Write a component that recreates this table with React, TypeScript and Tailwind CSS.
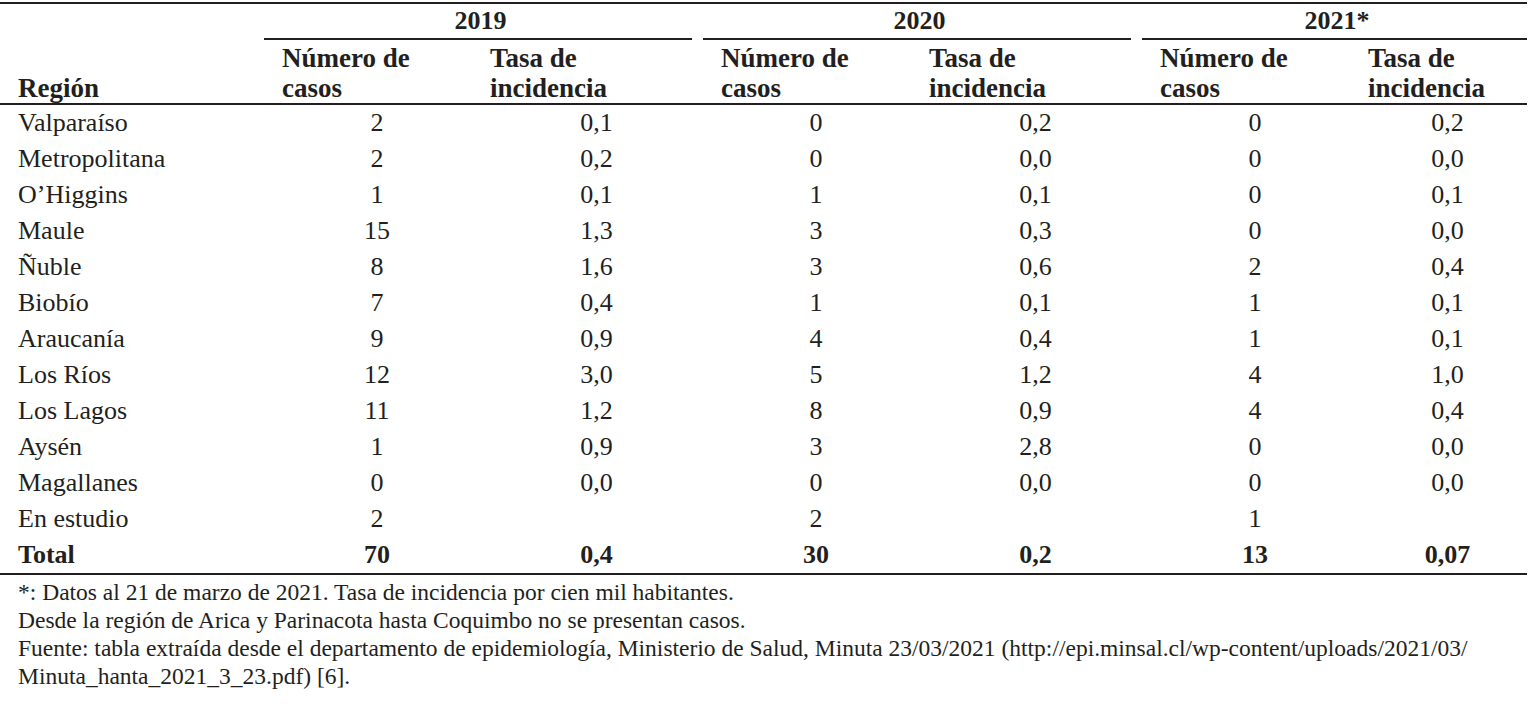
import React from "react";

type Row = { region: string; v: (string | null)[] };

const rows: Row[] = [
  { region: "Valparaíso", v: ["2", "0,1", "0", "0,2", "0", "0,2"] },
  { region: "Metropolitana", v: ["2", "0,2", "0", "0,0", "0", "0,0"] },
  { region: "O’Higgins", v: ["1", "0,1", "1", "0,1", "0", "0,1"] },
  { region: "Maule", v: ["15", "1,3", "3", "0,3", "0", "0,0"] },
  { region: "Ñuble", v: ["8", "1,6", "3", "0,6", "2", "0,4"] },
  { region: "Biobío", v: ["7", "0,4", "1", "0,1", "1", "0,1"] },
  { region: "Araucanía", v: ["9", "0,9", "4", "0,4", "1", "0,1"] },
  { region: "Los Ríos", v: ["12", "3,0", "5", "1,2", "4", "1,0"] },
  { region: "Los Lagos", v: ["11", "1,2", "8", "0,9", "4", "0,4"] },
  { region: "Aysén", v: ["1", "0,9", "3", "2,8", "0", "0,0"] },
  { region: "Magallanes", v: ["0", "0,0", "0", "0,0", "0", "0,0"] },
  { region: "En estudio", v: ["2", null, "2", null, "1", null] },
];

const total = ["70", "0,4", "30", "0,2", "13", "0,07"];
const years = ["2019", "2020", "2021*"];

export default function App() {
  return (
    <div className="w-[1529px] bg-white pt-[2px] font-['Liberation_Serif',serif] text-[#231f20]">
      <div className="mr-[2px] border-t-2 border-[#231f20]">
        {/* header */}
        <div className="grid grid-cols-[264px_208px_231px_208px_231px_208px_1fr] border-b-2 border-[#231f20]">
          <div className="row-span-2 flex items-end pl-[18px] text-[27px] font-bold leading-[30px]">
            Región
          </div>
          {years.map((y, i) => (
            <div
              key={y}
              className={`col-span-2 h-[36px] border-b-2 border-[#231f20] pl-[5px] text-center text-[26px] font-bold leading-[34px] ${
                i < 2 ? "mr-[11px]" : ""
              }`}
            >
              {y}
            </div>
          ))}
          {years.map((y) => (
            <React.Fragment key={"h" + y}>
              <div className="h-[63px] pl-[18px] pt-[3px] text-[27px] font-bold leading-[30px] whitespace-nowrap">
                Número de
                <br />
                casos
              </div>
              <div className="h-[63px] pl-[18px] pt-[3px] text-[27px] font-bold leading-[30px] whitespace-nowrap">
                Tasa de
                <br />
                incidencia
              </div>
            </React.Fragment>
          ))}
        </div>

        {/* body */}
        <div className="grid grid-cols-[264px_208px_231px_208px_231px_208px_1fr] text-[26px] leading-[36px]">
          {rows.map((r) => (
            <React.Fragment key={r.region}>
              <div className="h-9 pl-[18px]">{r.region}</div>
              {r.v.map((c, j) => (
                <div key={j} className="h-9 pl-[18px] text-center">
                  {c ?? ""}
                </div>
              ))}
            </React.Fragment>
          ))}
          <div className="h-9 pl-[18px] font-bold">Total</div>
          {total.map((c, j) => (
            <div key={j} className="h-9 pl-[18px] text-center font-bold">
              {c}
            </div>
          ))}
        </div>
      </div>

      <div className="mr-[2px] border-t-2 border-[#231f20] pl-[18px] pt-[3px] text-[23.5px] leading-[28px] whitespace-nowrap">
        <p>*: Datos al 21 de marzo de 2021. Tasa de incidencia por cien mil habitantes.</p>
        <p>Desde la región de Arica y Parinacota hasta Coquimbo no se presentan casos.</p>
        <p>
          Fuente: tabla extraída desde el departamento de epidemiología, Ministerio de Salud, Minuta 23/03/2021
          (http://epi.minsal.cl/wp-content/uploads/2021/03/
          <br />
          Minuta_hanta_2021_3_23.pdf) [6].
        </p>
      </div>
    </div>
  );
}
